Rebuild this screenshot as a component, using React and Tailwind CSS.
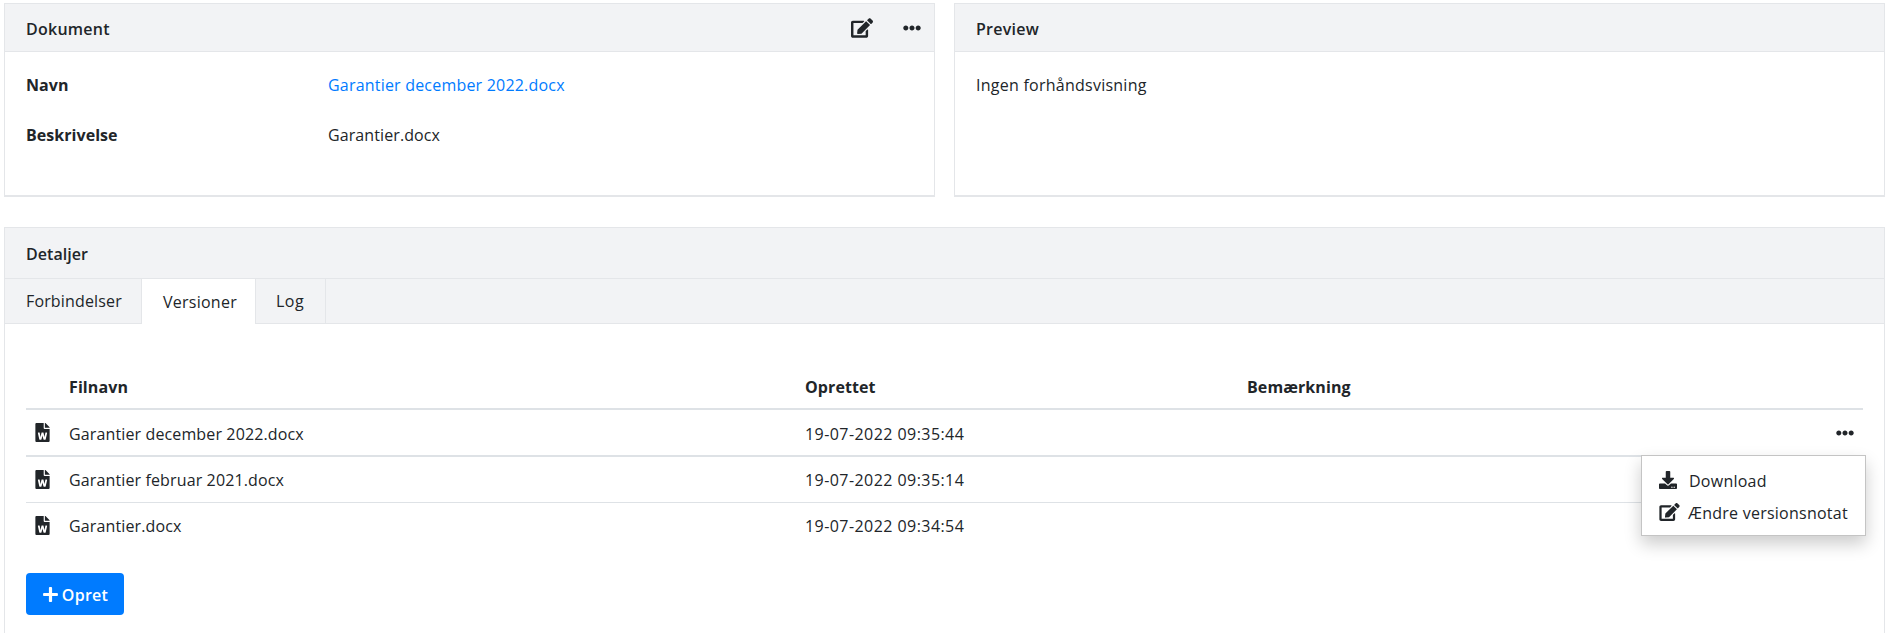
import React from "react";
import { FaEdit, FaEllipsisH, FaFileWord, FaDownload, FaPlus } from "react-icons/fa";

const rows = [
  ["Garantier december 2022.docx", "19-07-2022 09:35:44", "h-[47px] border-b-2", true],
  ["Garantier februar 2021.docx", "19-07-2022 09:35:14", "h-[46px] border-b", false],
  ["Garantier.docx", "19-07-2022 09:34:54", "h-[46px]", false],
];

function CardHeader({ title, children }) {
  return (
    <div className="h-[48px] bg-[#f2f3f5] border-b border-[#e4e6e9] pl-[21px] pr-[13px] flex items-center justify-between">
      <span className="font-semibold tracking-[0.25px] pt-[2px]">{title}</span>
      {children}
    </div>
  );
}

export default function App() {
  return (
    <div className="h-[633px] overflow-hidden bg-white pl-[4px] pr-[6px] pt-[3px] text-[16px] text-[#212529] flex flex-col gap-[30px] font-['Open_Sans',sans-serif] tracking-[0.25px]">
      <div className="grid grid-cols-2 gap-[19px] h-[194px] shrink-0">
        <div className="border border-[#e4e6e9] border-b-2">
          <CardHeader title="Dokument">
            <div className="flex items-center gap-[30px]">
              <FaEdit className="w-[22px] h-[20px]" />
              <FaEllipsisH className="w-[18px] h-[18px]" />
            </div>
          </CardHeader>
          <div className="pl-[21px] pt-[21px]">
            <div className="flex h-[50px] items-start">
              <span className="w-[302px] font-bold tracking-[0.1px]">Navn</span>
              <span className="text-[#007bff] tracking-[0.2px]">Garantier december 2022.docx</span>
            </div>
            <div className="flex h-[50px] items-start">
              <span className="w-[302px] font-bold tracking-[0.05px]">Beskrivelse</span>
              <span className="tracking-[0.1px]">Garantier.docx</span>
            </div>
          </div>
        </div>
        <div className="border border-[#e4e6e9] border-b-2">
          <CardHeader title="Preview" />
          <div className="pl-[21px] pt-[21px]">Ingen forhåndsvisning</div>
        </div>
      </div>
      <div className="border border-[#e4e6e9] h-[460px] shrink-0 relative">
        <div className="h-[51px] bg-[#f2f3f5] border-b border-[#e4e6e9] pl-[21px] flex items-center">
          <span className="font-semibold tracking-[0.05px] pt-[2px]">Detaljer</span>
        </div>
        <div className="h-[45px] bg-[#f2f3f5] border-b border-[#e4e6e9] flex">
          <div className="w-[136px] pl-[21px] flex items-center tracking-[0.15px]">Forbindelser</div>
          <div className="w-[115px] h-[45px] pl-[21px] flex items-center bg-white border-x border-[#e4e6e9]">Versioner</div>
          <div className="w-[70px] pl-[20px] flex items-center border-r border-[#e4e6e9]">
            <span className="tracking-[0.5px]">Log</span>
          </div>
        </div>
        <div className="mx-[21px]">
          <table className="w-full mt-[39px] border-collapse table-fixed">
            <thead>
              <tr className="h-[46px] border-b-2 border-[#dee2e6] text-left">
                <th className="w-[43px]"></th>
                <th className="w-[736px] font-bold tracking-[0.1px] pt-[2px]">Filnavn</th>
                <th className="w-[442px] font-bold tracking-[0.1px] pt-[2px]">Oprettet</th>
                <th className="font-bold tracking-[0.1px] pt-[2px]">Bemærkning</th>
                <th className="w-[40px]"></th>
              </tr>
            </thead>
            <tbody>
              {rows.map(([name, date, cls, menu]) => (
                <tr key={name} className={`${cls} border-[#dee2e6]`}>
                  <td><FaFileWord className="ml-[9px] w-[15px] h-[19px]" /></td>
                  <td className="pt-[2px] tracking-[0.13px]">{name}</td>
                  <td className="pt-[2px] tracking-[0.44px]">{date}</td>
                  <td></td>
                  <td>{menu && <FaEllipsisH className="ml-[13px] w-[18px] h-[18px]" />}</td>
                </tr>
              ))}
            </tbody>
          </table>
          <button className="mt-[25px] w-[98px] h-[42px] rounded-[4px] bg-[#007bff] text-white font-semibold flex items-center justify-center gap-[3px] tracking-[0.25px]">
            <FaPlus className="w-[17px] h-[17px]" />
            <span className="pt-[1px]">Opret</span>
          </button>
        </div>
        <div className="absolute left-[1636px] top-[227px] w-[225px] h-[81px] bg-white border border-[#c4c4c4] shadow-[0_8px_16px_rgba(0,0,0,0.2)] flex flex-col justify-center pl-[17px] gap-[4px] whitespace-nowrap">
          <div className="flex items-center gap-[12px] h-[28px]">
            <FaDownload className="w-[18px] h-[18px]" />
            <span className="pt-[2px]">Download</span>
          </div>
          <div className="flex items-center gap-[11px] h-[28px]">
            <FaEdit className="w-[21px] h-[18px] -mr-[3px]" />
            <span className="pt-[2px]">Ændre versionsnotat</span>
          </div>
        </div>
      </div>
    </div>
  );
}
